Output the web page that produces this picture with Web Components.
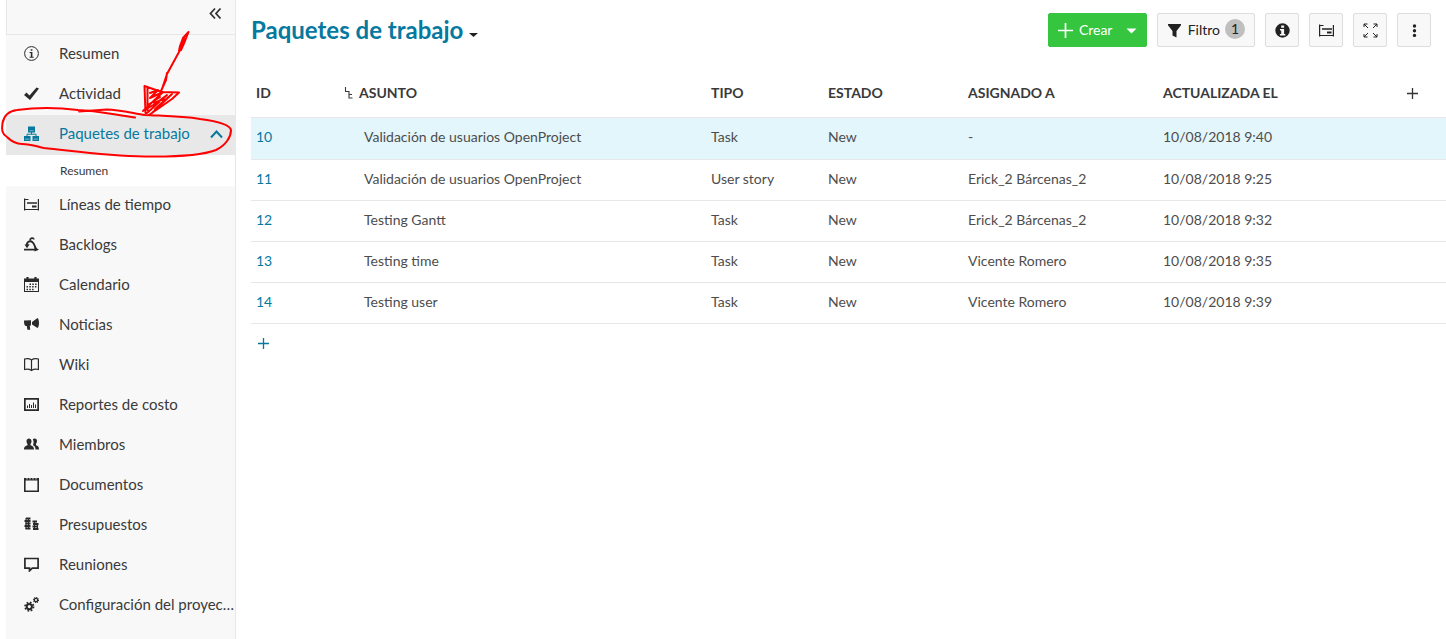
<!DOCTYPE html>
<html lang="es">
<head>
<meta charset="utf-8">
<title>Paquetes de trabajo</title>
<style>
  body { margin: 0; background: #fff; color: #333; font: 14px/20px Lato, "Liberation Sans", sans-serif; }
</style>
</head>
<body>
<op-app></op-app>

<script>
const ICONS = {
  collapse: '<path d="M7 2.500 2.500 7.500 7 12.500M12.500 2.500 8 7.500l4.500 5" fill="none" stroke="currentColor" stroke-width="1.800"/>',
  info: '<circle cx="7.500" cy="7.500" r="6.900" fill="none" stroke="currentColor" stroke-width="1"/><path d="M6.700 3.200h1.700v1.500H6.700zM5.500 6h2.900v4.800h1.200v.9h-4v-.9h1.200V6.900H5.500z"/>',
  check: '<path d="M0 9 2.500 6.500l3 3L12.500 1.500 15 2.500 6 14z"/>',
  packages: '<path d="M4 .5h7v6H4zM0 10h6.500v5H0zM8.500 10H15v5H8.500z"/><path d="M7.500 6v2.200M3 10V8.200h9V10" fill="none" stroke="currentColor"/><path d="M5.500 4.700h4M1 13.200h4.500M9.500 13.200H14" stroke="#e8e8e8" stroke-width=".5"/>',
  timeline: '<path d="M.6 1.500v12M14.400 2v11.500M0 12.500h15M0 2.500h4.500" fill="none" stroke="currentColor" stroke-width="1.200"/><path d="M3 5.200h10v1.600H3zM8 8.500h4.500V10.500H8z"/>',
  backlogs: '<path d="M3 9.500C2 5 6 3 8.500 5.200c2.500 2 2 5 4 7.300" fill="none" stroke="currentColor" stroke-width="1.800"/><path d="M6 3.600C6 .5 9.500.3 9.800 2.500M0 12.700h11" fill="none" stroke="currentColor" stroke-width="1.700"/><path d="m.5 7.500 5.200-.3L3 11.300zM10.500 9.800l4.500 3-4.500 1.700z"/>',
  calendar: '<path fill-rule="evenodd" d="M0 1.500h15V15H0zm1 3.500v9h13V5z"/><path d="M3.500 0v3M11.500 0v3" stroke="currentColor" stroke-width="2.200"/><path d="M5.500 7.200H13M2.500 9.800H13M2.500 12.400h8" stroke="currentColor" stroke-width="1.500" stroke-dasharray="1.500 1.300"/>',
  news: '<path d="M0 3.500 7 3.200v5.300H5.800l.4 4.300H3.400L2.800 9H1.500C0 8 0 5 0 3.500zM8 5 13.500 1C15.500 2.500 15.500 9.500 13.500 11L8 7.500z"/>',
  wiki: '<path d="M7.500 3C5.500 1.500 3 1.500.6 2v10.500c2.400-.5 4.900-.4 6.900 1 2-1.400 4.500-1.500 6.900-1V2C12 1.500 9.500 1.500 7.500 3zv10.500" fill="none" stroke="currentColor" stroke-width="1.200"/>',
  report: '<path fill-rule="evenodd" d="M0 1h15v13H0zm1.700 1.700v9.600h11.600V2.700z"/><path d="M3.500 11V8.500M5.500 11V7M7.500 11V8M9.500 11V5.500M11.500 11V7.500" stroke="currentColor"/>',
  members: '<path d="M2.500 4c0-3.500 5-3.500 5 0 0 1.500-.5 2.500-1 3v1.200c2 .8 3.500 1.200 3.500 4.300H0c0-3.100 1.500-3.500 3.500-4.300V7c-.5-.5-1-1.500-1-3zM8.800 2.300c1.500-1.800 4.500-.8 4.200 1.900-.1 1.300-.5 2-1 2.600v1.400c2 .7 3 1.300 3 4.300h-3.500c0-2.500-.7-3.500-2.400-4.300V7.500c.6-.9.800-3.200-.3-5.200z"/>',
  document: '<path fill-rule="evenodd" d="M0 1h15v14H0zm1.600 2.400v10h11.800v-10z"/><path d="M3 0v2.500M6 0v2.500M9 0v2.500M12 0v2.500" stroke="#f8f8f8" stroke-width=".9"/>',
  budget: '<path d="M2 1.500h4.500M.5 4h6M1.500 6.500h5M.5 9h6M1.500 11.500h5M8.500 4.500H13M9 7h5.500M8.500 9.500H13M9 12h5.500" stroke="currentColor" stroke-width="1.800"/><path d="M2 1v11M4.500 1v11M10.500 4v8.500M13.500 6v6" stroke="currentColor" stroke-width="1.100"/>',
  meeting: '<path d="M.9 1.500h13.200v9.600H8.300L5.500 13.800v-2.700H.9z" fill="none" stroke="currentColor" stroke-width="1.700"/>',
  gears: '<circle cx="5.300" cy="9.600" r="2.600" fill="none" stroke="currentColor" stroke-width="2"/><circle cx="5.300" cy="9.600" r="4.200" fill="none" stroke="currentColor" stroke-width="1.800" stroke-dasharray="1.700 1.600"/><circle cx="12" cy="3" r="1.700" fill="none" stroke="currentColor" stroke-width="1.300"/><circle cx="12" cy="3" r="2.500" fill="none" stroke="currentColor" stroke-width="1.200" stroke-dasharray="1 .96"/>',
  up: '<path d="m2 11.500 5.500-6 5.500 6" fill="none" stroke="currentColor" stroke-width="2"/>',
  caret: '<path d="M2.500 5.500h10l-5 5z"/>',
  viewcaret: '<path d="M3 6h9l-4.500 4z"/>',
  plus: '<path d="M7.500 0v15M0 7.500h15" stroke="currentColor" stroke-width="1.700"/>',
  thinplus: '<path d="M7.500 2v11M2 7.500h11" stroke="currentColor" stroke-width="1.300"/>',
  filter: '<path d="M1 1h13v1.300L9.500 8v6.500l-4-2V8L1 2.300z"/>',
  infofill: '<path fill-rule="evenodd" d="M7.500.3a7.200 7.200 0 1 0 0 14.400 7.200 7.200 0 0 0 0-14.400zM6.200 2.500h2.900v2.200H6.200zM5 6h4.100v5h1.200v1.400H4.900V11h1.300V7.400H5z"/>',
  expand: '<path d="M1 4V1h3.500M10.500 1H14v3M14 11v3h-3.500M4.500 14H1v-3M1 1l4 4M14 1l-4 4M14 14l-4-4M1 14l4-4" fill="none" stroke="currentColor" stroke-width="1"/>',
  dots: '<circle cx="7.500" cy="3" r="1.700"/><circle cx="7.500" cy="7.700" r="1.700"/><circle cx="7.500" cy="12.400" r="1.700"/>',
  tree: '<path d="M1.500 2v4.500h3.500V13h3.500M5 9.500h3" fill="none" stroke="currentColor" stroke-width="1.100"/>'
};

class OpBase extends HTMLElement {
  connectedCallback() {
    if (!this.shadowRoot) this.attachShadow({ mode: 'open' }).innerHTML = this.render();
  }
}

class OpIcon extends OpBase {
  render() {
    return `<style>
      :host { display: block; flex: none; width: 15px; height: 15px; }
      svg { display: block; width: 100%; height: 100%; fill: currentColor; }
    </style><svg viewBox="0 0 15 15" aria-hidden="true">${ICONS[this.getAttribute('name')]}</svg>`;
  }
}

class OpMenuItem extends OpBase {
  render() {
    const icon = this.getAttribute('icon');
    return `<style>
      :host { display: block; }
      a { display: flex; align-items: center; box-sizing: border-box; height: 40px; padding: 0 0 4px 18px;
          font-size: 15px; line-height: 20px; color: #3a3a3a; text-decoration: none; }
      span { flex: 1; min-width: 0; overflow: hidden; text-overflow: ellipsis; white-space: nowrap; }
      .lead { margin-right: 20px; color: #2a2a2a; }
      :host([active]) a { background: #e8e8e8; color: #06799f; padding-right: 11px; }
      :host([active]) .lead { color: inherit; }
      :host([sub]) a { background: #fff; height: 31px; padding: 0 0 0 54px; font-size: 12px; }
    </style>
    <a href="#">${icon ? `<op-icon class="lead" name="${icon}"></op-icon>` : ''}<span><slot></slot></span>${this.hasAttribute('active') ? '<op-icon name="up"></op-icon>' : ''}</a>`;
  }
}

class OpSidebar extends OpBase {
  render() {
    return `<style>
      :host { display: block; box-sizing: border-box; margin-left: 6px; background: #f8f8f8; border-right: 1px solid #e7e7e7; }
      header { display: flex; justify-content: flex-end; align-items: flex-start; box-sizing: border-box; height: 35px;
        padding: 6px 12px 0 0; border-bottom: 1px solid #e7e7e7; border-left: 1px solid #e7e7e7; }
      button { padding: 0; border: 0; background: none; color: #333; }
    </style>
    <header><button type="button" aria-label="Ocultar menú"><op-icon name="collapse"></op-icon></button></header>
    <nav><slot></slot></nav>`;
  }
}

class OpButton extends OpBase {
  render() {
    const label = this.getAttribute('label');
    return `<style>
      :host { display: block; }
      button { display: flex; align-items: center; justify-content: center; box-sizing: border-box; min-width: 34px; height: 34px;
        padding: 0 9px; border: 1px solid #ddd; border-radius: 2px; background: #f8f8f8; color: #222; font: inherit; line-height: 20px; }
      :host([label]) button { padding: 0 8px; }
      :host([primary]) button { min-width: 99px; background: #35c53f; border-color: #35c53f; color: #fff; padding: 0 7px 0 9px; }
    </style><button type="button"${label ? ` aria-label="${label}"` : ''}><slot></slot></button>`;
  }
}

class OpToolbar extends OpBase {
  render() {
    return `<style>
      :host { display: flex; justify-content: space-between; align-items: flex-start; padding: 13px 15px 0 0; }
      h1 { display: flex; align-items: center; gap: 3px; margin: 0; font-size: 24px; line-height: 34px; font-weight: 700; color: #06799f; }
      h1 button { padding: 8px 0 0; border: 0; background: none; color: #222; }
      .actions { display: flex; gap: 10px; }
      .text { flex: 1; margin: 0 11px 0 6px; }
      .label { margin: 0 5px 0 6px; }
      .badge { width: 20px; height: 20px; border-radius: 50%; background: #bfbfbf; line-height: 20px; text-align: center; margin-bottom: 2px; }
    </style>
    <h1>Paquetes de trabajo<button type="button" aria-label="Vistas"><op-icon name="viewcaret"></op-icon></button></h1>
    <div class="actions">
      <op-button primary><op-icon name="plus"></op-icon><span class="text">Crear</span><op-icon name="caret"></op-icon></op-button>
      <op-button><op-icon name="filter"></op-icon><span class="label">Filtro</span><span class="badge">1</span></op-button>
      <op-button label="Detalles"><op-icon name="infofill"></op-icon></op-button>
      <op-button label="Gantt"><op-icon name="timeline"></op-icon></op-button>
      <op-button label="Pantalla completa"><op-icon name="expand"></op-icon></op-button>
      <op-button label="Más"><op-icon name="dots"></op-icon></op-button>
    </div>`;
  }
}

class OpTable extends OpBase {
  render() {
    const rows = [
      [10, 'Validación de usuarios OpenProject', 'Task', '-', '9:40'],
      [11, 'Validación de usuarios OpenProject', 'User story', 'Erick_2 Bárcenas_2', '9:25'],
      [12, 'Testing Gantt', 'Task', 'Erick_2 Bárcenas_2', '9:32'],
      [13, 'Testing time', 'Task', 'Vicente Romero', '9:35'],
      [14, 'Testing user', 'Task', 'Vicente Romero', '9:39']
    ];
    return `<style>
      :host { display: block; padding-top: 21px; }
      table { width: 100%; table-layout: fixed; border-collapse: separate; border-spacing: 0; }
      th, td { box-sizing: border-box; padding: 0 0 0 5px; border-bottom: 1px solid #e7e7e7; text-align: left; white-space: nowrap; }
      th { height: 50px; font-weight: 700; color: #3a3a3a; }
      td { height: 41px; padding-bottom: 2px; color: #4d4d4d; }
      th > div { display: flex; align-items: center; }
      th.subject { padding-left: 0; }
      td.subject { padding-left: 20px; }
      tr.selected td { height: 42px; padding-bottom: 4px; background: #e3f6fb; }
      .id { width: 93px; } .type { width: 117px; } .state { width: 140px; } .who { width: 195px; } .date { width: 242px; } .add { width: 46px; }
      a { color: #06799f; text-decoration: none; }
      button { display: block; padding: 0; border: 0; background: none; color: #333; }
      .add { padding-top: 2px; }
      .new { margin: 12px 0 0 5px; color: #06799f; }
    </style>
    <table>
      <thead><tr>
        <th class="id">ID</th>
        <th class="subject"><div><op-icon name="tree"></op-icon>ASUNTO</div></th>
        <th class="type">TIPO</th><th class="state">ESTADO</th><th class="who">ASIGNADO A</th><th class="date">ACTUALIZADA EL</th>
        <th class="add"><button type="button" aria-label="Añadir columna"><op-icon name="thinplus"></op-icon></button></th>
      </tr></thead>
      <tbody>${rows.map(([id, subject, type, who, time], i) => `
        <tr${i === 0 ? ' class="selected"' : ''}><td><a href="#${id}">${id}</a></td><td class="subject">${subject}</td><td>${type}</td><td>New</td><td>${who}</td><td>10/08/2018 ${time}</td><td></td></tr>`).join('')}
      </tbody>
    </table>
    <button class="new" type="button" aria-label="Crear paquete de trabajo"><op-icon name="thinplus"></op-icon></button>`;
  }
}

/* Hand-drawn red pen marks lying over the menu. */
class OpMarkup extends OpBase {
  render() {
    return `<style>
      :host { position: absolute; top: 0; left: 0; pointer-events: none; }
      svg { display: block; }
    </style>
    <svg width="240" height="170" fill="none" stroke="#f00" stroke-width="2" stroke-linecap="round" stroke-linejoin="round" aria-hidden="true">
      <path d="M135 117.500C116 115 96 110.500 78 110 58 107.500 35 107.500 17 110 8 111 4 116 2.500 123 1.500 130 2 134 7 137 12 142 17 144 22 144 32 144 38 147 44 148 74 151 105 156 145 156.500 178 157 203 155 216 150 226 145 231 137 231 130 230 124 215 121 200 119 182 116 165 116 145 115 132 113 119 110 107 109.500L79 111.500 M79 111l14 0"/>
      <path d="M188.500 32 183 38 180 46 179 51 181 50 185 41 188.500 32 M184 38 181 48 M179 52 173 63 167 74 162 89 M167 73 166 80 161 91"/>
      <path d="M144.500 86 145.500 113 M147.500 88 147.500 110 M144.500 86 153 89 162 92 179 92.500 172 99 162 106 149 115 M150 93 158 90 150 98 163 92 143 111 155 104 167 95 147 113 M152 113 172 94 155 109 M154 103 164 99 M148 105 160 97"/>
    </svg>`;
  }
}

class OpApp extends OpBase {
  render() {
    const items = [['timeline', 'Líneas de tiempo'], ['backlogs', 'Backlogs'], ['calendar', 'Calendario'], ['news', 'Noticias'],
      ['wiki', 'Wiki'], ['report', 'Reportes de costo'], ['members', 'Miembros'], ['document', 'Documentos'],
      ['budget', 'Presupuestos'], ['meeting', 'Reuniones'], ['gears', 'Configuración del proyecto']];
    return `<style>
      :host { display: grid; grid-template-columns: 236px 1fr; min-height: 100vh; position: relative; }
      main { min-width: 0; padding-left: 15px; }
    </style>
    <op-sidebar>
      <op-menu-item icon="info">Resumen</op-menu-item>
      <op-menu-item icon="check">Actividad</op-menu-item>
      <op-menu-item icon="packages" active>Paquetes de trabajo</op-menu-item>
      <op-menu-item sub>Resumen</op-menu-item>
      ${items.map(([icon, text]) => `<op-menu-item icon="${icon}">${text}</op-menu-item>`).join('')}
    </op-sidebar>
    <main><op-toolbar></op-toolbar><op-table></op-table></main>
    <op-markup></op-markup>`;
  }
}

customElements.define('op-icon', OpIcon);
customElements.define('op-menu-item', OpMenuItem);
customElements.define('op-sidebar', OpSidebar);
customElements.define('op-button', OpButton);
customElements.define('op-toolbar', OpToolbar);
customElements.define('op-table', OpTable);
customElements.define('op-markup', OpMarkup);
customElements.define('op-app', OpApp);
</script>
</body>
</html>
